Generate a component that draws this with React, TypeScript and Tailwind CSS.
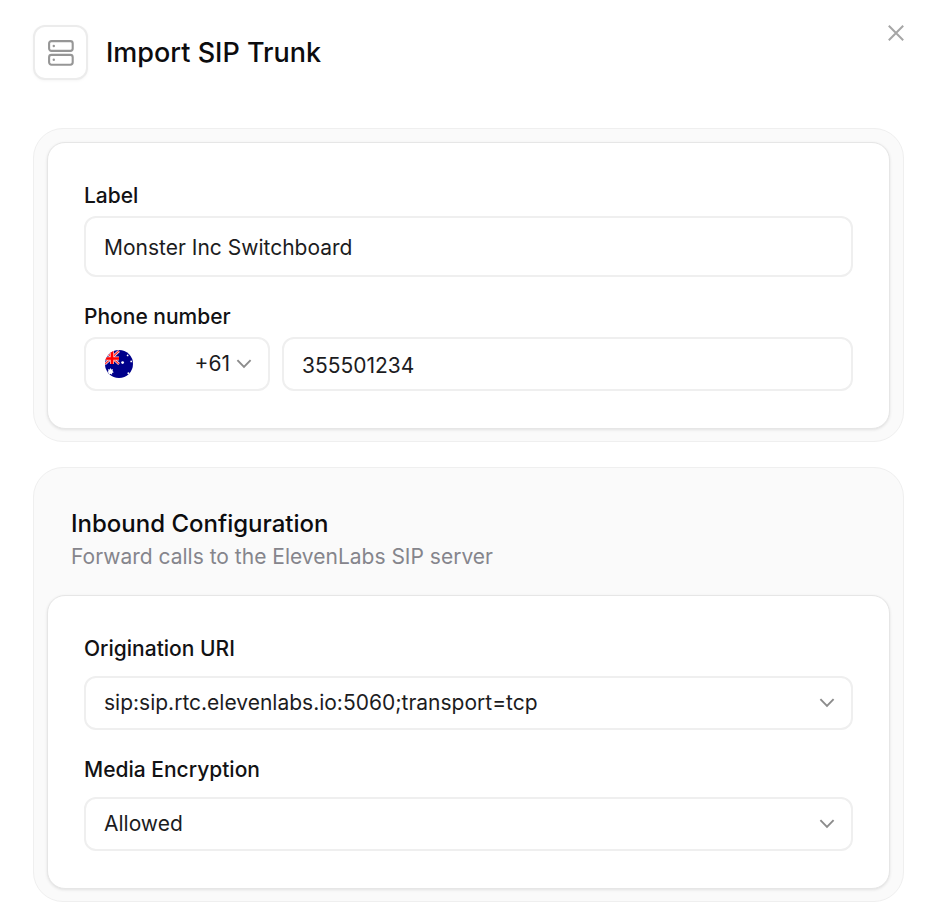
import { useState } from "react";
import type { ReactNode } from "react";

function ServerIcon() {
  return (
    <svg width="26" height="26" viewBox="0 0 26 26" fill="none" stroke="#969696" strokeWidth="2.1" aria-hidden="true">
      <rect x="1.1" y="1.1" width="23.6" height="9.8" rx="2.4" />
      <rect x="1.1" y="14.9" width="23.6" height="9.8" rx="2.4" />
      <circle cx="5.8" cy="6" r="1.2" fill="#969696" stroke="none" />
      <circle cx="5.8" cy="19.8" r="1.2" fill="#969696" stroke="none" />
    </svg>
  );
}

function Chevron() {
  return (
    <svg width="16" height="16" viewBox="0 0 16 16" fill="none" stroke="#8c8c8c" strokeWidth="1.9" aria-hidden="true">
      <path d="M1.4 4.2 8 10.8l6.6-6.6" />
    </svg>
  );
}

function AustraliaFlag() {
  return (
    <svg width="28" height="28" viewBox="0 0 28 28" aria-hidden="true">
      <defs>
        <clipPath id="flag-circle">
          <circle cx="14" cy="14" r="14" />
        </clipPath>
      </defs>
      <g clipPath="url(#flag-circle)">
        <rect width="28" height="28" fill="#00008b" />
        <path d="M0 1 14 14M14 1 0 14" stroke="#fff" strokeWidth="2.4" />
        <path d="M0 1 14 14M14 1 0 14" stroke="#f33" strokeWidth="1.3" />
        <path d="M7 0v14M0 8.5h14" stroke="#fcc" strokeWidth="4" />
        <path d="M7 0v14M0 8.5h14" stroke="#f00" strokeWidth="2.6" />
        <path d="m5.5 18 .8 1.6 1.8-.3-.6 1.8 1.3 1.2-1.7.6v1.8l-1.6-1-1.6 1v-1.8l-1.7-.6 1.3-1.2-.6-1.8 1.8.3z" fill="#fff" />
        <circle cx="17.6" cy="12.6" r="1.4" fill="#fff" />
        <circle cx="22.6" cy="5.4" r="0.9" fill="#fff" />
        <circle cx="26.2" cy="11.4" r="0.9" fill="#fff" />
        <circle cx="23.4" cy="23.2" r="1" fill="#fff" />
      </g>
    </svg>
  );
}

const control =
  "w-full rounded-xl border-2 border-[#efefef] bg-white px-[18px] text-[21px] text-[#1c1c1e] outline-none focus:border-[#cfcfcf]";

function Panel({ title, subtitle, children }: { title?: string; subtitle?: string; children: ReactNode }) {
  return (
    <section className="rounded-[30px] border border-[#efefef] bg-[#fafafa] p-[13px] pb-3">
      {title && (
        <div className="px-6 pt-[26px] pb-[22px]">
          <h2 className="text-2xl leading-[33px] font-medium text-[#0c0c0e]">{title}</h2>
          <p className="text-[21px] leading-[33px] text-[#85858c]">{subtitle}</p>
        </div>
      )}
      <div className="flex flex-col gap-6 rounded-[18px] border border-[#e6e6e6] bg-white px-9 py-[37px] shadow-[0_1px_3px_rgba(0,0,0,0.1)]">
        {children}
      </div>
    </section>
  );
}

function SelectField({ id, label, options }: { id: string; label: string; options: string[] }) {
  return (
    <div className="flex flex-col gap-[11px]">
      <label htmlFor={id} className="text-[21px] leading-8 font-medium text-[#121214]">
        {label}
      </label>
      <div className="relative">
        <select id={id} className={`${control} block h-[54px] appearance-none pr-12`}>
          {options.map((o) => (
            <option key={o}>{o}</option>
          ))}
        </select>
        <span className="pointer-events-none absolute inset-y-0 right-[18px] flex items-center">
          <Chevron />
        </span>
      </div>
    </div>
  );
}

export default function App() {
  const [label, setLabel] = useState("Monster Inc Switchboard");
  const [phone, setPhone] = useState("355501234");

  return (
    <main className="min-h-screen bg-white pt-[25px] pr-9 pl-[33px] font-[Inter,'Liberation_Sans',sans-serif]">
      <header className="flex items-center">
        <span className="flex size-[55px] items-center justify-center rounded-xl border-2 border-[#ececec] bg-white shadow-[0_1px_3px_rgba(0,0,0,0.04)]">
          <ServerIcon />
        </span>
        <h1 className="ml-[18px] text-[27px] leading-9 font-medium text-[#0c0c0e]">Import SIP Trunk</h1>
        <button type="button" aria-label="Close" className="ml-auto self-start">
          <svg width="16" height="16" viewBox="0 0 16 16" fill="none" stroke="#a6a6a6" strokeWidth="2" aria-hidden="true">
            <path d="m.8.8 14.4 14.4M15.2.8.8 15.2" />
          </svg>
        </button>
      </header>

      <form className="mt-12 flex flex-col gap-[25px]" onSubmit={(e) => e.preventDefault()}>
        <Panel>
          <div className="flex flex-col gap-1">
            <label htmlFor="label" className="text-[21px] leading-8 font-medium text-[#121214]">
              Label
            </label>
            <input
              id="label"
              value={label}
              onChange={(e) => setLabel(e.target.value)}
              className={`${control} h-[61px] pt-0.5`}
            />
          </div>
          <div className="flex flex-col gap-1">
            <label htmlFor="phone" className="text-[21px] leading-8 font-medium text-[#121214]">
              Phone number
            </label>
            <div className="flex gap-3">
              <div className="relative w-[186px] shrink-0">
                <select
                  aria-label="Country code"
                  className={`${control} block h-[54px] appearance-none pr-[38px] text-right`}
                >
                  <option>+61</option>
                </select>
                <span className="pointer-events-none absolute inset-y-0 right-[18px] left-[21px] flex items-center justify-between">
                  <AustraliaFlag />
                  <Chevron />
                </span>
              </div>
              <input
                id="phone"
                type="tel"
                value={phone}
                onChange={(e) => setPhone(e.target.value)}
                className={`${control} h-[54px] min-w-0 flex-1 pt-0.5`}
              />
            </div>
          </div>
        </Panel>

        <Panel title="Inbound Configuration" subtitle="Forward calls to the ElevenLabs SIP server">
          <SelectField id="uri" label="Origination URI" options={["sip:sip.rtc.elevenlabs.io:5060;transport=tcp"]} />
          <SelectField id="encryption" label="Media Encryption" options={["Allowed"]} />
        </Panel>
      </form>
    </main>
  );
}
